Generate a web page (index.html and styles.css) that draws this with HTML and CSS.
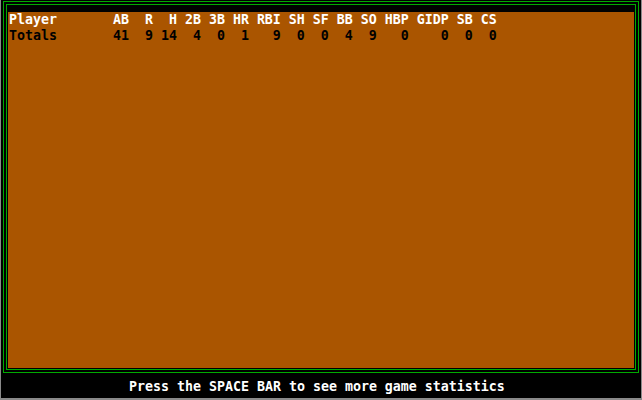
FILE: index.html
```html
<!DOCTYPE html>
<html>
<head>
<meta charset="utf-8">
<title>Game statistics</title>
<link rel="stylesheet" href="styles.css">
</head>
<body>
<div class="screen">
  <div class="frame-outer">
    <div class="frame-inner">
      <div class="field">
        <pre class="row head">Player       AB  R  H 2B 3B HR RBI SH SF BB SO HBP GIDP SB CS</pre>
        <pre class="row data">Totals       41  9 14  4  0  1   9  0  0  4  9   0    0  0  0</pre>
      </div>
    </div>
  </div>
  <div class="status">
    <pre class="prompt">Press the SPACE BAR to see more game statistics</pre>
  </div>
</div>
</body>
</html>
```

FILE: styles.css
```css
html, body {
  margin: 0;
  padding: 0;
  background: #000;
}

.screen {
  box-sizing: border-box;
  width: 642px;
  height: 400px;
  display: flex;
  flex-direction: column;
  border-left: 1px solid #8a8a8a;
  border-right: 1px solid #8a8a8a;
  border-bottom: 2px solid #8a8a8a;
  background: #000;
  font-family: "DejaVu Sans Mono", "Liberation Mono", monospace;
  font-weight: bold;
  font-size: 13.29px;
}

.frame-outer {
  margin: 1px 2px 0 2px;
  border: 1px solid #00aa00;
  padding: 2px;
  height: 372px;
  box-sizing: border-box;
  display: flex;
}

.frame-inner {
  flex: 1;
  display: flex;
  border: 1px solid #00aa00;
  padding: 7px 1px 1px 1px;
}

.field {
  flex: 1;
  background: #aa5500;
  padding: 0 0 0 1px;
}

.row {
  margin: 0;
  height: 16px;
  line-height: 16px;
  font: inherit;
  white-space: pre;
  transform: scaleY(1.12);
  transform-origin: 0 60%;
}

.head {
  color: #ffffff;
}

.data {
  color: #000000;
}

.status {
  flex: 1;
  display: flex;
  align-items: center;
  padding: 3px 0 0 128px;
}

.prompt {
  margin: 0;
  font: inherit;
  line-height: 16px;
  color: #ffffff;
  white-space: pre;
  transform: scaleY(1.12);
}
```
